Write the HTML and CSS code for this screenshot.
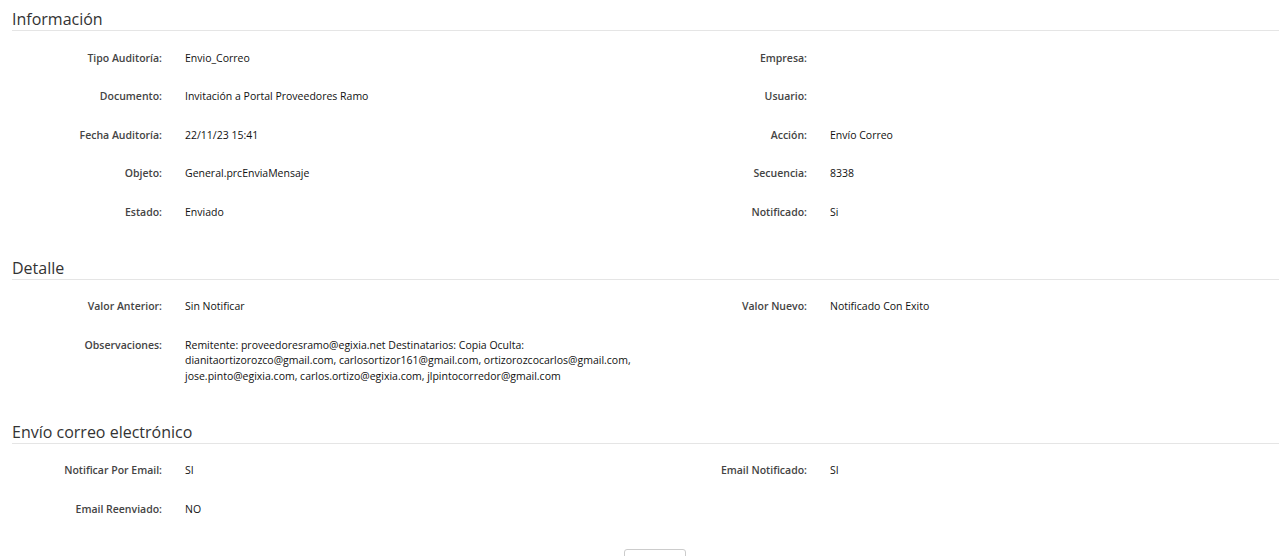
FILE: index.html
```html
<!DOCTYPE html>
<html lang="es">
<head>
    <meta charset="UTF-8">
    <meta name="viewport" content="width=device-width, initial-scale=1.0">
    <title>Auditoría</title>
    <link rel="stylesheet" href="styles.css">
</head>
<body>
    <div class="section">
        <div class="section-title">Información</div>
        <div class="fields">
            <div class="field"><div class="field-label">Tipo Auditoría:</div><div class="field-value">Envio_Correo</div></div>
            <div class="field"><div class="field-label">Empresa:</div><div class="field-value"></div></div>
            <div class="field"><div class="field-label">Documento:</div><div class="field-value">Invitación a Portal Proveedores Ramo</div></div>
            <div class="field"><div class="field-label">Usuario:</div><div class="field-value"></div></div>
            <div class="field"><div class="field-label">Fecha Auditoría:</div><div class="field-value">22/11/23 15:41</div></div>
            <div class="field"><div class="field-label">Acción:</div><div class="field-value">Envío Correo</div></div>
            <div class="field"><div class="field-label">Objeto:</div><div class="field-value">General.prcEnviaMensaje</div></div>
            <div class="field"><div class="field-label">Secuencia:</div><div class="field-value">8338</div></div>
            <div class="field"><div class="field-label">Estado:</div><div class="field-value">Enviado</div></div>
            <div class="field"><div class="field-label">Notificado:</div><div class="field-value">Si</div></div>
        </div>
    </div>

    <div class="section">
        <div class="section-title">Detalle</div>
        <div class="fields">
            <div class="field"><div class="field-label">Valor Anterior:</div><div class="field-value">Sin Notificar</div></div>
            <div class="field"><div class="field-label">Valor Nuevo:</div><div class="field-value">Notificado Con Exito</div></div>
            <div class="field"><div class="field-label">Observaciones:</div><div class="field-value obs">Remitente: proveedoresramo@egixia.net Destinatarios: Copia Oculta: dianitaortizorozco@gmail.com, carlosortizor161@gmail.com, ortizorozcocarlos@gmail.com, jose.pinto@egixia.com, carlos.ortizo@egixia.com, jlpintocorredor@gmail.com</div></div>
        </div>
    </div>

    <div class="section">
        <div class="section-title">Envío correo electrónico</div>
        <div class="fields">
            <div class="field"><div class="field-label">Notificar Por Email:</div><div class="field-value">SI</div></div>
            <div class="field"><div class="field-label">Email Notificado:</div><div class="field-value">SI</div></div>
            <div class="field"><div class="field-label">Email Reenviado:</div><div class="field-value">NO</div></div>
        </div>
    </div>

    <div class="actions">
        <button class="btn" aria-label="Cerrar"></button>
    </div>
</body>
</html>
```

FILE: styles.css
```css
body {
    font-family: "Open Sans", Arial, sans-serif;
    margin: 0;
    padding: 8px 0 0 12px;
    color: #222;
    overflow: hidden;
}
.section {
    margin-bottom: 25px;
}
.section-title {
    font-size: 16px;
    line-height: 22px;
    color: #333;
    border-bottom: 1px solid #e5e5e5;
}
.fields {
    display: grid;
    grid-template-columns: 645px 1fr;
    padding-top: 8px;
}
.field {
    display: flex;
    padding: 11.5px 0;
    font-size: 10.5px;
    line-height: 15.5px;
}
.field-label {
    width: 150px;
    flex-shrink: 0;
    text-align: right;
    font-weight: 600;
    color: #444;
}
.field-value {
    margin-left: 23px;
    color: #111;
}
.obs {
    max-width: 452px;
}
.actions {
    display: flex;
    justify-content: center;
    padding-left: 19px;
    margin-top: -4.5px;
}
.btn {
    width: 62px;
    height: 32px;
    background-color: #fff;
    border: 1px solid #ccc;
    border-radius: 3px;
}
```
